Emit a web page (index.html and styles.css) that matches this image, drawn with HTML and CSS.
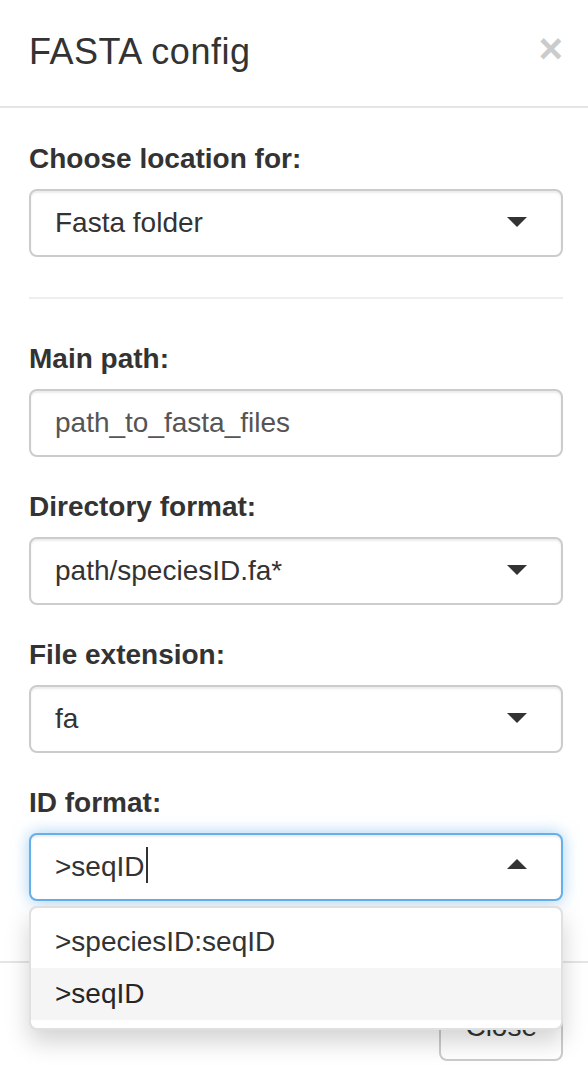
FILE: index.html
```html
<!DOCTYPE html>
<html>
<head>
<meta charset="utf-8">
<link rel="stylesheet" href="styles.css">
</head>
<body>
<div class="modal">
  <div class="modal-header">
    <h4 class="modal-title">FASTA config</h4>
    <button class="close" type="button">×</button>
  </div>
  <div class="modal-body">
    <div class="form-group">
      <label class="control-label">Choose location for:</label>
      <div class="select">
        <div class="select-input"><span class="item">Fasta folder</span></div>
      </div>
    </div>
    <hr class="divider">
    <div class="form-group">
      <label class="control-label">Main path:</label>
      <div class="text-input">path_to_fasta_files</div>
    </div>
    <div class="form-group">
      <label class="control-label">Directory format:</label>
      <div class="select">
        <div class="select-input"><span class="item">path/speciesID.fa*</span></div>
      </div>
    </div>
    <div class="form-group">
      <label class="control-label">File extension:</label>
      <div class="select">
        <div class="select-input"><span class="item">fa</span></div>
      </div>
    </div>
    <div class="form-group">
      <label class="control-label">ID format:</label>
      <div class="select open">
        <div class="select-input focus"><span class="item">&gt;seqID</span><span class="cursor"></span></div>
        <div class="dropdown">
          <div class="option">&gt;speciesID:seqID</div>
          <div class="option active">&gt;seqID</div>
        </div>
      </div>
    </div>
  </div>
  <div class="modal-footer">
    <button class="btn" type="button">Close</button>
  </div>
</div>
</body>
</html>
```

FILE: styles.css
```css
html, body {
  margin: 0;
  padding: 0;
  background: #fff;
}
body {
  font-family: "Liberation Sans", Arial, sans-serif;
  font-size: 28px;
  line-height: 40px;
  color: #333;
}
.modal {
  background: #fff;
}
.modal-header {
  display: flex;
  justify-content: space-between;
  align-items: flex-start;
  padding: 26px 25px 29px 29px;
  border-bottom: 2px solid #e5e5e5;
}
.modal-title {
  margin: 0;
  font-size: 36px;
  font-weight: normal;
  letter-spacing: 0.5px;
  line-height: 51px;
  color: #333;
}
.close {
  margin-top: 2px;
  padding: 0;
  border: 0;
  background: none;
  font-family: "Liberation Sans", Arial, sans-serif;
  font-size: 42px;
  font-weight: bold;
  line-height: 1;
  color: #000;
  opacity: 0.2;
  text-shadow: 0 1px 0 #fff;
}
.modal-body {
  padding: 31px 25px 30px 29px;
}
.form-group {
  margin-bottom: 30px;
}
.control-label {
  display: block;
  font-weight: bold;
  line-height: 40px;
  margin-bottom: 10px;
}
.divider {
  margin: 40px 0;
  border: 0;
  border-top: 2px solid #eee;
  height: 0;
}
.text-input,
.select-input {
  box-sizing: border-box;
  height: 68px;
  padding: 12px 24px;
  line-height: 40px;
  border: 2px solid #ccc;
  border-radius: 8px;
  background: #fff;
  box-shadow: inset 0 2px 2px rgba(0, 0, 0, 0.075);
}
.text-input {
  color: #555;
}
.select {
  position: relative;
}
.select-input {
  position: relative;
  color: #333;
}
.select-input::after {
  content: "";
  position: absolute;
  top: 50%;
  right: 34px;
  margin-top: -6px;
  width: 0;
  height: 0;
  border-style: solid;
  border-width: 10px 10px 0 10px;
  border-color: #333 transparent transparent transparent;
}
.select-input.focus {
  border-color: #66afe9;
  box-shadow: inset 0 2px 2px rgba(0, 0, 0, 0.075), 0 0 16px rgba(102, 175, 233, 0.6);
}
.select-input.focus::after {
  margin-top: -8px;
  border-width: 0 10px 10px 10px;
  border-color: transparent transparent #333 transparent;
}
.cursor {
  display: inline-block;
  width: 2px;
  height: 36px;
  margin-left: 1px;
  background: #333;
  vertical-align: -7px;
}
.dropdown {
  position: absolute;
  top: 100%;
  left: 0;
  right: 0;
  margin-top: 5px;
  padding: 8px 0;
  background: #fff;
  border: 2px solid rgba(0, 0, 0, 0.12);
  border-radius: 8px;
  box-shadow: 0 12px 24px rgba(0, 0, 0, 0.175);
  z-index: 10;
}
.option {
  padding: 6px 24px;
  line-height: 40px;
  color: #333;
}
.option.active {
  background: #f5f5f5;
  color: #262626;
}
.modal-footer {
  padding: 30px 25px 30px 29px;
  border-top: 2px solid #e5e5e5;
  text-align: right;
}
.btn {
  box-sizing: border-box;
  height: 68px;
  padding: 12px 24px;
  font-family: "Liberation Sans", Arial, sans-serif;
  font-size: 28px;
  line-height: 40px;
  color: #333;
  background: #fff;
  border: 2px solid #ccc;
  border-radius: 8px;
}
```
